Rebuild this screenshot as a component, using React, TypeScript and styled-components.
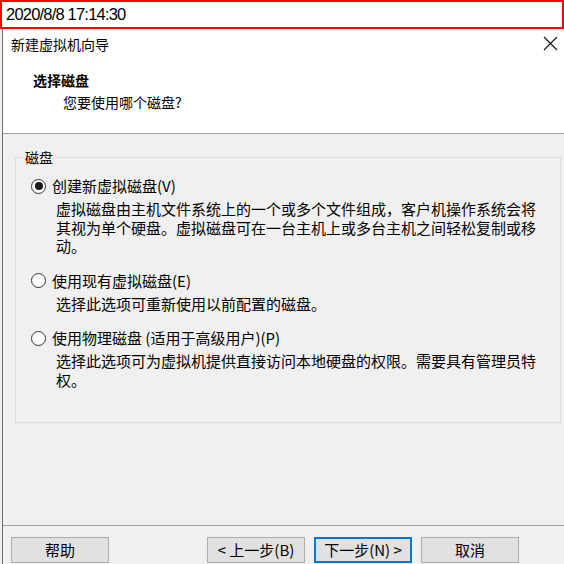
import React from "react";
import styled, { createGlobalStyle } from "styled-components";

const Global = createGlobalStyle`
  html, body { margin: 0; padding: 0; }
  body {
    width: 564px;
    height: 564px;
    overflow: hidden;
    background: #f0f0f0;
    font-family: "Noto Sans CJK SC", "Microsoft YaHei", sans-serif;
    color: #000;
  }
  #root { height: 564px; }
`;

const Page = styled.div`
  display: flex;
  flex-direction: column;
  height: 564px;
  width: 564px;
`;

const TimeBar = styled.div`
  box-sizing: border-box;
  height: 29px;
  border: 2px solid #ff0000;
  background: #ffffff;
  display: flex;
  align-items: center;
  padding-left: 4px;
  font-family: "Liberation Sans", Arial, sans-serif;
  font-size: 16.5px;
  letter-spacing: -0.8px;
  color: #000;
`;

const Dialog = styled.div`
  flex: 1;
  display: flex;
  flex-direction: column;
  margin-left: 2px;
  border-left: 1px solid #6e6e6e;
  background: #f0f0f0;
  min-height: 0;
`;

const TitleBar = styled.div`
  height: 29px;
  background: #ffffff;
  display: flex;
  align-items: center;
  justify-content: space-between;
  padding: 0 6px 0 8px;
  font-size: 14px;
`;

const CloseIcon = styled.svg`
  width: 15px;
  height: 15px;
  display: block;
`;

const Header = styled.div`
  box-sizing: border-box;
  height: 76px;
  background: #ffffff;
  border-bottom: 1px solid #a0a0a0;
  padding-top: 12px;
  display: flex;
  flex-direction: column;
  gap: 2px;
  font-size: 14px;
  line-height: 20px;
`;

const HeaderTitle = styled.div`
  font-weight: 700;
  padding-left: 30px;
`;

const HeaderSub = styled.div`
  padding-left: 60px;
`;

const Body = styled.div`
  flex: 1;
  padding: 13px 3px 0 12px;
`;

const Group = styled.fieldset`
  margin: 0;
  padding: 0;
  height: 276px;
  box-sizing: border-box;
  border: 1px solid #dcdcdc;
  min-width: 0;
`;

const Legend = styled.legend`
  margin-left: 6px;
  padding: 0 3px;
  font-size: 14px;
  line-height: 20px;
`;

const Options = styled.div`
  display: flex;
  flex-direction: column;
  gap: 15px;
  padding-top: 9px;
`;

const Option = styled.div`
  display: flex;
  flex-direction: column;
  gap: 4px;
`;

const OptionRow = styled.div`
  display: flex;
  align-items: center;
  gap: 6px;
  padding-left: 15px;
  font-size: 15px;
  line-height: 20px;
`;

const Radio = styled.span<{ $checked?: boolean }>`
  box-sizing: border-box;
  width: 15px;
  height: 15px;
  border-radius: 50%;
  border: 1px solid #333333;
  background: #ffffff;
  display: flex;
  align-items: center;
  justify-content: center;
  &::after {
    content: "";
    width: 8px;
    height: 8px;
    border-radius: 50%;
    background: #1a1a1a;
    display: ${(p) => (p.$checked ? "block" : "none")};
  }
`;

const Desc = styled.div`
  padding-left: 40px;
  width: 488px;
  font-size: 15px;
  line-height: 18.5px;
`;

const Footer = styled.div`
  height: 39px;
  box-sizing: border-box;
  border-top: 1px solid #a0a0a0;
  padding: 11px 45px 1px 8px;
  display: flex;
  justify-content: space-between;
  align-items: flex-start;
`;

const ButtonGroup = styled.div`
  display: flex;
  gap: 9px;
`;

const Button = styled.button<{ $default?: boolean }>`
  box-sizing: border-box;
  width: 98px;
  height: 26px;
  margin: 0;
  padding: 0;
  background: #e1e1e1;
  border: ${(p) => (p.$default ? "2px solid #0078d7" : "1px solid #adadad")};
  font-family: "Noto Sans CJK SC", "Microsoft YaHei", sans-serif;
  font-size: 15px;
  line-height: 20px;
  color: #000;
  display: flex;
  align-items: center;
  justify-content: center;
`;

const options = [
  {
    label: "创建新虚拟磁盘(V)",
    desc: "虚拟磁盘由主机文件系统上的一个或多个文件组成，客户机操作系统会将其视为单个硬盘。虚拟磁盘可在一台主机上或多台主机之间轻松复制或移动。",
    checked: true,
  },
  {
    label: "使用现有虚拟磁盘(E)",
    desc: "选择此选项可重新使用以前配置的磁盘。",
  },
  {
    label: "使用物理磁盘 (适用于高级用户)(P)",
    desc: "选择此选项可为虚拟机提供直接访问本地硬盘的权限。需要具有管理员特权。",
  },
];

export default function App() {
  return (
    <Page>
      <Global />
      <TimeBar>2020/8/8 17:14:30</TimeBar>
      <Dialog>
        <TitleBar>
          <span>新建虚拟机向导</span>
          <CloseIcon viewBox="0 0 15 15">
            <path d="M1 1 L14 14 M14 1 L1 14" stroke="#111" strokeWidth="1.1" fill="none" />
          </CloseIcon>
        </TitleBar>
        <Header>
          <HeaderTitle>选择磁盘</HeaderTitle>
          <HeaderSub>您要使用哪个磁盘?</HeaderSub>
        </Header>
        <Body>
          <Group>
            <Legend>磁盘</Legend>
            <Options>
              {options.map((o) => (
                <Option key={o.label}>
                  <OptionRow>
                    <Radio $checked={o.checked} />
                    <span>{o.label}</span>
                  </OptionRow>
                  <Desc>{o.desc}</Desc>
                </Option>
              ))}
            </Options>
          </Group>
        </Body>
        <Footer>
          <Button>帮助</Button>
          <ButtonGroup>
            <Button>&lt; 上一步(B)</Button>
            <Button $default>下一步(N) &gt;</Button>
            <Button>取消</Button>
          </ButtonGroup>
        </Footer>
      </Dialog>
    </Page>
  );
}
